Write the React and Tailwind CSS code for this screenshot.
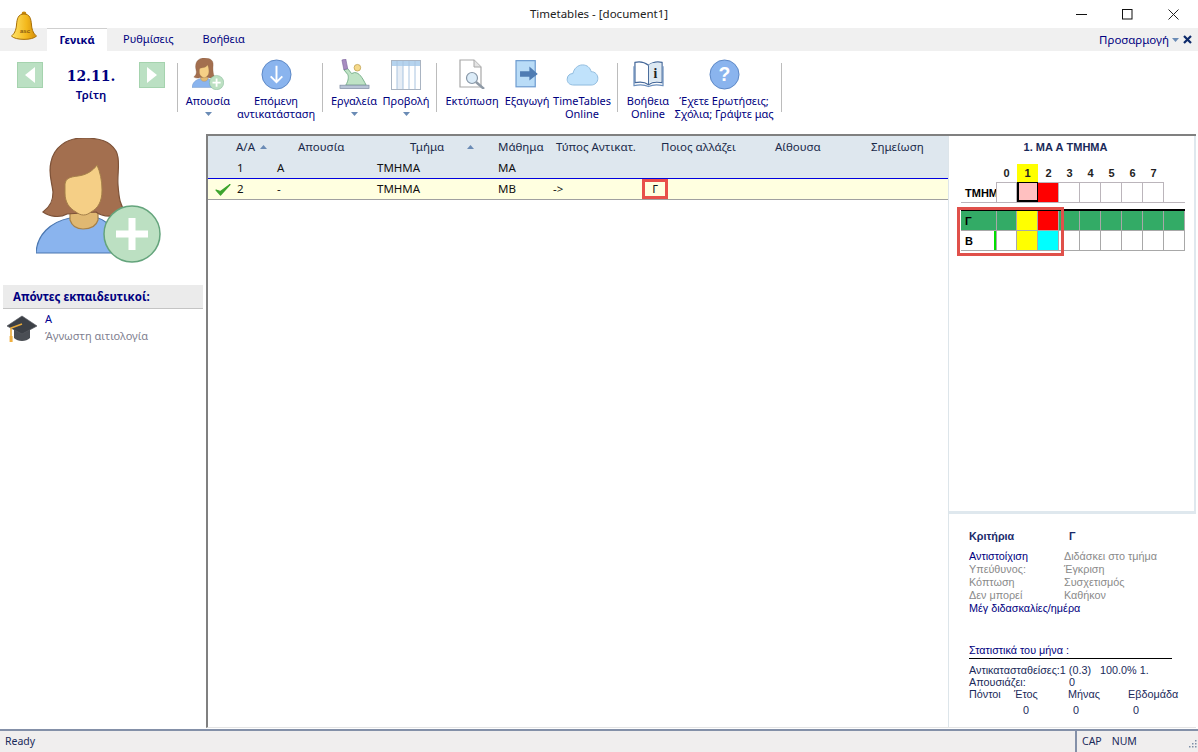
import React from 'react';

const Woman = ({ className }) => (
  <svg viewBox="0 0 125 125" className={className}>
    <path d="M0 115C1 97 14 84 34 80L62 80C72 83 80 92 84 115Z" fill="#8ab4ee" stroke="#4b77b0" strokeWidth="1.2" />
    <path d="M34 72L62 72L62 82C60 89 53 91 47 91C41 91 36 88 34 82Z" fill="#e0b872" stroke="#a5804a" strokeWidth="1.2" />
    <path d="M47 0C64 0 74 3 80 13C85 22 81 35 82 47C83 60 84 68 90 74C80 80 66 79 60 74L31 76C24 80 14 79 7 74C15 68 17 62 17 54C16 44 12 36 15 24C18 9 31 0 47 0Z" fill="#a36f4f" stroke="#7d5238" strokeWidth="1.2" />
    <path d="M29 46C30 40 34 39 42 38C50 37 57 33 61 27C64 34 66 42 66 52C66 64 62 70 55 74C50 78 45 78 40 74C33 70 29 64 29 55Z" fill="#f5cf86" stroke="#a5804a" strokeWidth="1" />
    <circle cx="96" cy="96" r="28" fill="#bce0c2" stroke="#64a47c" strokeWidth="1.5" />
    <path d="M92.5 80H99.5V92.5H112V99.5H99.5V112H92.5V99.5H80V92.5H92.5Z" fill="#fff" />
  </svg>
);

const Bell = () => (
  <svg viewBox="0 0 28 30" className="h-[30px] w-[28px]">
    <defs>
      <linearGradient id="bellFill" x1="0" y1="0" x2="1" y2="0">
        <stop offset="0" stopColor="#ffe46a" />
        <stop offset="0.6" stopColor="#f3b81c" />
        <stop offset="1" stopColor="#d48c08" />
      </linearGradient>
    </defs>
    <circle cx="14" cy="3" r="2.4" fill="#c98a0a" />
    <path d="M14 3C8 3 7 8 6.5 14C6 20 4 23 1.5 25C5 29.5 23 29.5 26.5 25C24 23 22 20 21.5 14C21 8 20 3 14 3Z" fill="url(#bellFill)" stroke="#a86f06" strokeWidth="1" />
    <text x="15" y="22" fontSize="6" fontWeight="bold" fill="#8a5c10" textAnchor="middle" fontFamily="Liberation Sans, sans-serif">asc</text>
  </svg>
);

const ArrowBtn = ({ dir }) => (
  <div className="flex h-[26px] w-[26px] items-center justify-center border border-[#a5d3ae] bg-[#bbe0c3]">
    <svg viewBox="0 0 12 16" className="h-4 w-3">
      <path d={dir === 'l' ? 'M11 0V16L1 8Z' : 'M1 0V16L11 8Z'} fill="#fff" />
    </svg>
  </div>
);

const Caret = ({ className = '' }) => (
  <svg viewBox="0 0 7 4" className={`h-1 w-[7px] ${className}`}>
    <path d="M0 0H7L3.5 4Z" fill="#6a8bb5" />
  </svg>
);

const SortUp = ({ className = '' }) => (
  <svg viewBox="0 0 7 4" className={`h-1 w-[7px] ${className}`}>
    <path d="M0 4H7L3.5 0Z" fill="#6a8bb5" />
  </svg>
);

const Sep = () => <div className="mt-3 h-[49px] w-px bg-[#bcbcbc]" />;

const RibbonItem = ({ w, icon, lines, caret }) => (
  <div className={`flex flex-col items-center pt-[3px] ${w}`}>
    <div className="flex h-[36px] items-end justify-center">{icon}</div>
    <div className="mt-[4px] text-center leading-[13px] whitespace-nowrap">
      {lines.map((l) => (
        <div key={l}>{l}</div>
      ))}
    </div>
    {caret && <Caret className="mt-[5px]" />}
  </div>
);

const ArrowCircle = ({ q }) => (
  <svg viewBox="0 0 32 32" className="h-[31px] w-[31px]">
    <circle cx="16" cy="16" r="15" fill="#8ab4ee" stroke="#5b86c4" strokeWidth="1" />
    {q ? (
      <text x="16" y="23" fontSize="20" fontWeight="bold" fill="#fff" textAnchor="middle" fontFamily="Liberation Sans, sans-serif">?</text>
    ) : (
      <path d="M16 7V24M10 18L16 24L22 18" stroke="#fff" strokeWidth="2" fill="none" />
    )}
  </svg>
);

const Tools = () => (
  <svg viewBox="0 0 32 32" className="h-[31px] w-[31px]">
    <path d="M5 11L9 10L13 15L16 14C21 14 24 19 28 27H7C10 22 10 18 9 16Z" fill="#bfe3c5" stroke="#6fa983" strokeWidth=".9" />
    <path d="M3 1L7 0L9 10L5 11Z" fill="#a78cc0" stroke="#77609a" strokeWidth=".6" />
    <circle cx="19" cy="9" r="3.4" fill="#f5d98a" stroke="#bfa050" strokeWidth=".8" />
    <rect x="1" y="27" width="30" height="3.5" fill="#b8c4d6" stroke="#7c8aa0" strokeWidth=".7" />
  </svg>
);

const TableIcon = () => (
  <svg viewBox="0 0 30 30" className="h-[30px] w-[30px]">
    <rect x=".5" y=".5" width="29" height="29" fill="#fff" stroke="#a9b4c2" />
    <rect x="1" y="1" width="28" height="5" fill="#b5d3ee" />
    <rect x="6" y="6" width="6" height="23" fill="#e6edf5" />
    {[6, 12, 18, 24].map((x) => (
      <path key={x} d={`M${x} 1V29`} stroke="#a9c4e0" strokeWidth="1" />
    ))}
  </svg>
);

const Preview = () => (
  <svg viewBox="0 0 26 30" className="mb-px h-[30px] w-[28px]">
    <path d="M1 1H15L22 8V28H1Z" fill="#fff" stroke="#a8a8a8" strokeWidth="1.2" />
    <path d="M15 1V8H22" fill="#e4e4e4" stroke="#a8a8a8" strokeWidth="1" />
    <circle cx="13" cy="19" r="5.5" fill="#dcecf8" stroke="#8796a6" strokeWidth="1.2" />
    <path d="M17 23L25 30" stroke="#8f9aa6" strokeWidth="2.4" />
  </svg>
);

const ExportIcon = () => (
  <svg viewBox="0 0 26 30" className="mb-[2px] h-[28px] w-[25px]">
    <rect x=".7" y=".7" width="20.6" height="28" fill="#b9dcf7" stroke="#6e9cd0" strokeWidth="1.3" />
    <path d="M5 12H15V7L24 15L15 22V18H5Z" fill="#4f7cb3" />
  </svg>
);

const Cloud = () => (
  <svg viewBox="0 0 34 24" className="mb-[4px] h-[23px] w-[33px]">
    <path d="M8 23C3 23 1 20 1 17C1 13 4 11 7 11C8 6 12 2 17 2C22 2 25 5 26 9C30 9 33 12 33 16C33 20 30 23 26 23Z" fill="#c0e2fb" stroke="#8cb9dc" strokeWidth="1" />
  </svg>
);

const Book = () => (
  <svg viewBox="0 0 32 28" className="mb-[2px] h-[28px] w-[31px]">
    <path d="M16 5C11 1 6 1 2 2V23C7 22 12 22 16 25C20 22 25 22 30 23V2C26 1 21 1 16 5Z" fill="#fff" stroke="#46699a" strokeWidth="1.3" />
    <path d="M16 5C19 2 24 2 29 3V22C24 21 20 21 16 24Z" fill="#dce8f2" />
    <path d="M1 6V26C6 25 12 25 16 27C20 25 26 25 31 26V6" fill="none" stroke="#6b8fbd" strokeWidth="1.2" />
    <path d="M16 5V25" stroke="#46699a" strokeWidth="1" />
    <text x="23" y="18" fontSize="14" fontWeight="bold" fill="#222" textAnchor="middle" fontFamily="Liberation Serif, serif">i</text>
  </svg>
);

const Hat = () => (
  <svg viewBox="0 0 30 28" className="h-[28px] w-[30px]">
    <path d="M7 13V23C11 27 19 27 23 23V13Z" fill="#4a4e54" />
    <path d="M15 1L30 11L15 19L0 11Z" fill="#3c4046" stroke="#565a60" strokeWidth=".7" />
    <path d="M15 9L4 13V22" stroke="#e8a93a" strokeWidth="1.6" fill="none" />
    <rect x="2.6" y="21" width="3" height="6" fill="#f0b040" />
  </svg>
);

const Check = () => (
  <svg viewBox="0 0 16 13" className="h-[13px] w-4">
    <path d="M1 7L5.5 12L15 1.5L5.5 8.5Z" fill="#3da52d" stroke="#3da52d" strokeWidth="1.2" strokeLinejoin="round" />
  </svg>
);

function TopGrid() {
  const nums = [0, 1, 2, 3, 4, 5, 6, 7];
  return (
    <div className="ml-[12px] w-[224px]">
      <div className="flex h-[18px] pl-[35px] text-[11px] leading-[18px] font-bold text-[#222]">
        {nums.map((n) => (
          <div key={n} className={`w-[21px] text-center ${n === 1 ? 'bg-[#ffff00]' : ''}`}>
            {n}
          </div>
        ))}
      </div>
      <div className="flex h-[21px] border-b border-[#bbb5bb]">
        <div className="w-[35px] overflow-hidden pl-1 text-[11px] leading-[22px] font-bold whitespace-nowrap text-black">ΤΜΗΜΑ</div>
        {nums.map((n) => (
          <div
            key={n}
            className={`w-[21px] border-t border-r border-[#bbb5bb] ${n === 0 ? 'border-l' : ''} ${n === 1 ? 'border-2 border-black bg-[#ffc0c0]' : ''} ${n === 2 ? 'bg-[#ff0000]' : ''}`}
          />
        ))}
      </div>
    </div>
  );
}

function TeacherRow({ name, green, marker, colors }) {
  const cells = [0, 1, 2, 3, 4, 5, 6, 7, 8];
  return (
    <div className={`flex h-[20px] border-b border-[#a8a8a8] ${green ? 'bg-[#33ab66]' : 'bg-white'}`}>
      <div className={`w-[35px] pl-1 text-[11px] leading-[20px] font-bold text-black ${marker ? 'border-r-[2px] border-[#00e000]' : ''}`}>
        {name}
      </div>
      {cells.map((c) => (
        <div key={c} className={`w-[21px] border-r border-[#a8a8a8] ${c === 0 ? 'border-l' : ''} ${colors[c] || ''}`} />
      ))}
    </div>
  );
}

export default function App() {
  const tahoma = "font-['Noto_Sans',sans-serif]";
  const arial = "font-['Liberation_Sans',sans-serif]";

  return (
    <div className={`flex h-[752px] w-[1198px] flex-col overflow-hidden bg-white text-[11px] text-[#000080] ${tahoma}`}>
      {/* title bar */}
      <div className="relative flex h-[28px] shrink-0 items-center justify-center text-[11.5px] text-[#222]">
        Timetables - [document1]
        <div className="absolute top-[11px] left-[10px] z-10">
          <Bell />
        </div>
        <div className="absolute top-0 right-[19px] flex h-[28px] items-center gap-[35px]">
          <svg viewBox="0 0 11 11" className="h-[11px] w-[11px]"><path d="M0 5.5H11" stroke="#111" /></svg>
          <svg viewBox="0 0 11 11" className="h-[11px] w-[11px]"><rect x=".5" y=".5" width="9.5" height="9.5" fill="none" stroke="#111" /></svg>
          <svg viewBox="0 0 11 11" className="h-[11px] w-[11px]"><path d="M.5 .5L10.5 10.5M10.5 .5L.5 10.5" stroke="#222" /></svg>
        </div>
      </div>

      {/* tabs */}
      <div className="flex h-[23px] shrink-0 items-stretch bg-[#f0f0f0] pl-[47px] text-[11px]">
        <div className="flex w-[60px] items-center justify-center border-t border-[#cfcfcf] bg-white font-bold">Γενικά</div>
        <div className="ml-[16px] flex items-center">Ρυθμίσεις</div>
        <div className="ml-[29px] flex items-center">Βοήθεια</div>
        <div className="ml-auto flex items-center pr-[6px] text-[11.5px]">
          Προσαρμογή
          <Caret className="mx-[3px]" />
          <svg viewBox="0 0 9 9" className="ml-[1px] h-[9px] w-[9px]"><path d="M1 1L8 8M8 1L1 8" stroke="#0d2a6b" strokeWidth="2.2" /></svg>
        </div>
      </div>

      {/* ribbon */}
      <div className="flex h-[79px] shrink-0 items-start pl-[17px] text-[11px]">
        <div className="mt-[11px]"><ArrowBtn dir="l" /></div>
        <div className="mt-[15px] w-[96px] text-center">
          <div className="font-['DejaVu_Serif',serif] text-[14px] leading-[20px] font-bold">12.11.</div>
          <div className="mt-[2px] text-[11.5px] leading-[14px] font-semibold">Τρίτη</div>
        </div>
        <div className="mt-[11px]"><ArrowBtn dir="r" /></div>
        <div className="ml-[12px]"><Sep /></div>
        <RibbonItem w="w-[60px]" icon={<Woman className="h-[32px] w-[32px]" />} lines={['Απουσία']} caret />
        <RibbonItem w="w-[76px]" icon={<ArrowCircle />} lines={['Επόμενη', 'αντικατάσταση']} />
        <div className="ml-[8px]"><Sep /></div>
        <RibbonItem w="w-[62px]" icon={<Tools />} lines={['Εργαλεία']} caret />
        <RibbonItem w="w-[42px]" icon={<TableIcon />} lines={['Προβολή']} caret />
        <div className="ml-[9px]"><Sep /></div>
        <RibbonItem w="w-[70px]" icon={<Preview />} lines={['Εκτύπωση']} />
        <RibbonItem w="w-[40px]" icon={<ExportIcon />} lines={['Εξαγωγή']} />
        <RibbonItem w="w-[70px]" icon={<Cloud />} lines={['TimeTables', 'Online']} />
        <Sep />
        <RibbonItem w="w-[60px]" icon={<Book />} lines={['Βοήθεια', 'Online']} />
        <RibbonItem w="w-[92px]" icon={<ArrowCircle q />} lines={['Έχετε Ερωτήσεις;', 'Σχόλια; Γράψτε μας']} />
        <div className="ml-[11px]"><Sep /></div>
      </div>

      {/* main */}
      <div className="mt-[4px] mr-[2px] flex min-h-0 flex-1">
        {/* left sidebar */}
        <div className="w-[206px] shrink-0">
          <div className="pt-[4px] pl-[36px]">
            <Woman className="h-[125px] w-[125px]" />
          </div>
          <div className="mt-[22px] ml-[3px] h-[24px] w-[200px] border-b border-[#c4c4c4] bg-[#ebebeb] pl-[10px] text-[11.5px] leading-[23px] font-bold">
            Απόντες εκπαιδευτικοί:
          </div>
          <div className="mt-[1px] flex pl-[7px]">
            <div className="mt-[5px]"><Hat /></div>
            <div className="ml-[8px]">
              <div className="text-[11px] leading-[17px] text-[#000090]">Α</div>
              <div className="text-[11px] leading-[17px] text-[#7f7f90]">Άγνωστη αιτιολογία</div>
            </div>
          </div>
        </div>

        {/* table */}
        <div className="flex min-w-0 flex-1 border-t-2 border-b border-l-2 border-[#808080] border-b-[#e4e4e4] text-[11.5px] text-[#1a2a4a]">
          <div className="flex w-[741px] shrink-0 flex-col border-r border-[#dde5ea]">
            <div className="border-b border-[#0000e0] bg-[#dee7ee]">
              <div className="flex h-[21px] items-center">
                <div className="w-[28px]" />
                <div className="flex w-[41px] items-center">Α/Α<SortUp className="ml-[5px]" /></div>
                <div className="w-[100px] pl-[21px]">Απουσία</div>
                <div className="flex w-[121px] items-center pl-[33px]">Τμήμα<SortUp className="ml-[23px]" /></div>
                <div className="w-[55px]">Μάθημα</div>
                <div className="w-[89px] pl-[3px] whitespace-nowrap">Τύπος Αντικατ.</div>
                <div className="w-[128px] pl-[19px]">Ποιος αλλάζει</div>
                <div className="w-[96px] pl-[5px]">Αίθουσα</div>
                <div className="pl-[5px]">Σημείωση</div>
              </div>
              <div className="flex h-[21px] items-center text-[#111]">
                <div className="w-[29px]" />
                <div className="w-[40px]">1</div>
                <div className="w-[100px]">Α</div>
                <div className="w-[121px]">ΤΜΗΜΑ</div>
                <div className="w-[55px]">ΜΑ</div>
              </div>
            </div>
            <div className="flex h-[21px] items-center border-b border-[#a0a0a0] bg-[#ffffe0] text-[#111]">
              <div className="w-[28px] pl-[7px]"><Check /></div>
              <div className="w-[41px] pl-px">2</div>
              <div className="w-[100px]">-</div>
              <div className="w-[121px]">ΤΜΗΜΑ</div>
              <div className="w-[55px]">ΜΒ</div>
              <div className="w-[89px]">-&gt;</div>
              <div className="flex h-[20px] w-[26px] items-center justify-center border-[3px] border-[#e8504a]">Γ</div>
            </div>
          </div>

          {/* right panel */}
          <div className={`flex min-w-0 flex-1 flex-col text-[#000080] ${arial}`}>
            <div className="h-[378px] shrink-0 border-r-[2px] border-b-[3px] border-[#dfe8ee]">
              <div className="pt-[4px] pr-[12px] text-center text-[11px] leading-[14px] font-bold text-[#1a2a5a]">1. ΜΑ Α ΤΜΗΜΑ</div>
              <div className="mt-[10px]"><TopGrid /></div>
              <div className="relative mt-[6px] ml-[12px] w-[224px] border-t-2 border-black">
                <TeacherRow name="Γ" green colors={{ 1: 'bg-[#ffff00]', 2: 'bg-[#ff0000]' }} />
                <TeacherRow name="Β" marker colors={{ 1: 'bg-[#ffff00]', 2: 'bg-[#00ffff]' }} />
                <div className="absolute top-[-4px] left-[-4px] h-[49px] w-[107px] border-[3px] border-[#e0504a]" />
              </div>
            </div>

            <div className="flex-1 pl-[20px] text-[10.8px] leading-[13px]">
              <div className="mt-[16px] flex font-bold text-[#1a2a6a]">
                <div className="w-[100px]">Κριτήρια</div>
                <div>Γ</div>
              </div>
              <div className="mt-[7px] grid grid-cols-[95px_1fr] text-[#8a8a8a]">
                <div className="text-[#000080]">Αντιστοίχιση</div><div>Διδάσκει στο τμήμα</div>
                <div>Υπεύθυνος:</div><div>Έγκριση</div>
                <div>Κόπτωση</div><div>Συσχετισμός</div>
                <div>Δεν μπορεί</div><div>Καθήκον</div>
                <div className="col-span-2 text-[#000080]">Μέγ διδασκαλίες/ημέρα</div>
              </div>
              <div className="mt-[29px] w-[203px] border-b border-black pb-[1px] text-[#000080]">Στατιστικά του μήνα :</div>
              <div className="mt-[5px] text-[#1a2a5a]">
                <div className="leading-[12px]">Αντικατασταθείσες:1 (0.3)&nbsp;&nbsp; 100.0% 1.</div>
                <div className="flex leading-[12px]"><div className="w-[100px]">Απουσιάζει:</div><div>0</div></div>
                <div className="flex leading-[12px]">
                  <div className="w-[45px]">Πόντοι</div>
                  <div className="w-[54px]">Έτος</div>
                  <div className="w-[60px]">Μήνας</div>
                  <div>Εβδομάδα</div>
                </div>
                <div className="mt-[4px] flex pl-[54px] leading-[12px]">
                  <div className="w-[50px]">0</div>
                  <div className="w-[60px]">0</div>
                  <div>0</div>
                </div>
              </div>
            </div>
          </div>
        </div>
      </div>

      {/* status bar */}
      <div className="mt-[1px] flex h-[23px] shrink-0 items-center border-t-2 border-[#8490a8] bg-[#f0eeee] text-[10.5px] text-[#1a2a5a]">
        <div className="w-[1075px] pl-[5px]">Ready</div>
        <div className="flex h-full flex-1 items-center border-l-2 border-[#8490a8] pl-[5px]">
          <span>CAP</span>
          <span className="ml-[10px]">NUM</span>
          <svg viewBox="0 0 10 10" className="mt-[5px] ml-auto mr-[1px] h-[10px] w-[10px]">
            <path d="M8 1h1.5v1.5H8zM5 4h1.5v1.5H5zM8 4h1.5v1.5H8zM2 7h1.5v1.5H2zM5 7h1.5v1.5H5zM8 7h1.5v1.5H8z" fill="#7f8fa8" />
          </svg>
        </div>
      </div>
    </div>
  );
}
